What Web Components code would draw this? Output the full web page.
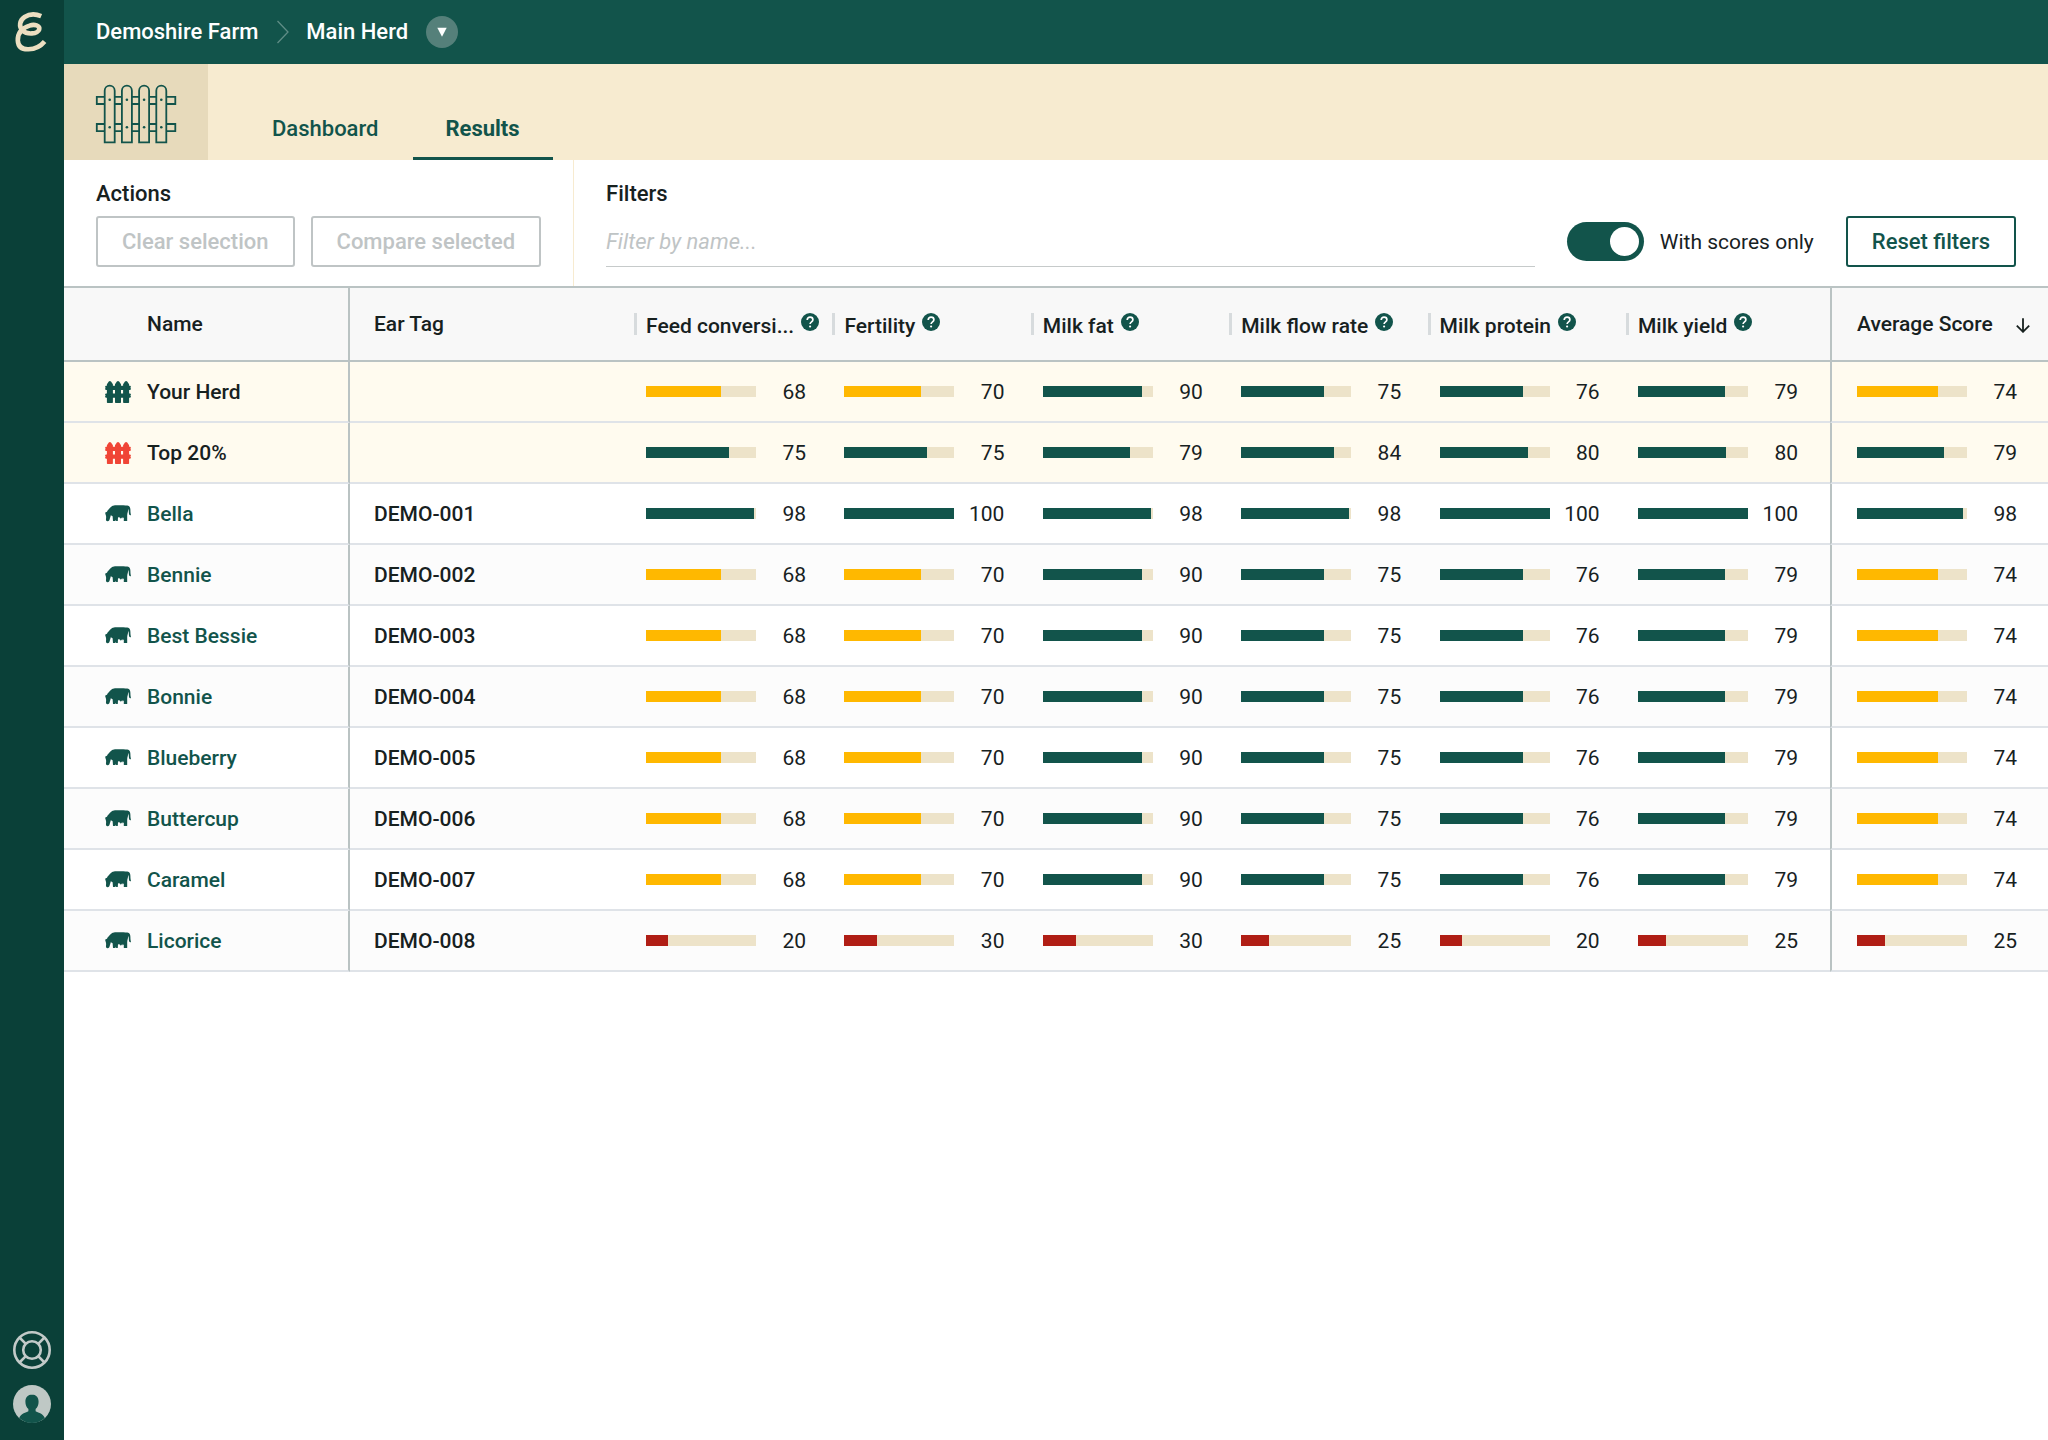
<!DOCTYPE html>
<html lang="en">
<head>
<meta charset="utf-8">
<title>Main Herd – Results</title>
<style>
  :root {
    --green: #12544b;
    --green-dark: #0a4038;
    --cream: #f7ebd0;
    --sand: #e7dabb;
    --ink: #17211f;
    --line: #bac3c3;
    --line-soft: #dfe3e8;
    --muted: #bfc4c5;
    --amber: #ffb800;
    --red: #b01e15;
    --track: #ede3c9;
  }
  body {
    margin: 0;
    background: #fff;
    color: var(--ink);
    font: 400 21px/28px Roboto, "Liberation Sans", sans-serif;
  }
</style>
</head>
<body>
<farm-app></farm-app>

<script>
const base = `
  *, *::before, *::after { box-sizing: border-box; }
  a { color: inherit; text-decoration: none; }
  svg { display: block; }
  button, input { font: inherit; color: inherit; margin: 0; }
`;

function define(name, html, setup) {
  const template = document.createElement('template');
  template.innerHTML = html;
  customElements.define(name, class extends HTMLElement {
    constructor() {
      super();
      this.attachShadow({ mode: 'open' }).append(template.content.cloneNode(true));
    }
    connectedCallback() { if (setup) setup(this, this.shadowRoot); }
  });
}

/* Action button: outlined, green or disabled grey */
define('action-button', `
  <style>${base}
    :host { display: block; }
    button {
      display: block; height: 51px; padding: 0 24px; white-space: nowrap;
      background: #fff; border: 2px solid var(--green); border-radius: 3px;
      color: var(--green); font-weight: 500; font-size: 22px; line-height: 28px;
    }
    button:disabled { border-color: var(--muted); color: var(--muted); }
  </style>
  <button type="button"><slot></slot></button>
`, (host, root) => {
  root.querySelector('button').disabled = host.hasAttribute('disabled');
});

define('score-bar', `
  <style>${base}
    :host { display: flex; align-items: center; justify-content: space-between; }
    .track { width: 110px; height: 11px; background: var(--track); }
    .fill { height: 100%; background: var(--green); }
    .mid { background: var(--amber); }
    .low { background: var(--red); }
    span { font-weight: 400; }
  </style>
  <div class="track"><div class="fill"></div></div><span></span>
`, (host, root) => {
  const v = Number(host.getAttribute('value'));
  const fill = root.querySelector('.fill');
  fill.style.width = (host.getAttribute('fill') || v) + '%';
  if (v < 50) fill.classList.add('low');
  else if (v < 75) fill.classList.add('mid');
  root.querySelector('span').textContent = v;
});

define('app-sidebar', `
  <style>${base}
    :host {
      display: flex; flex-direction: column; align-items: center;
      width: 64px; flex: none; padding: 6px 0 17px; background: var(--green-dark);
    }
    nav { margin-top: auto; display: grid; gap: 16px; }
    a { display: block; }
  </style>
  <a href="#home" aria-label="Home">
    <svg width="48" height="52" viewBox="8 6 48 52" fill="none" stroke="#ecdfc1" stroke-width="4.600">
      <path d="M41.200 16.200C36 14 29.500 13.900 24.600 17C19.500 20.500 18.600 26.500 22.500 30.500C27 34.800 37.500 34.300 39.200 29.500C40.200 25.500 34.500 23.900 29.500 25.600C21 28.200 17.600 34 17.800 40.500C18.200 47.500 23 49.500 28.500 49.300C36 49 40.500 46.500 44.600 41.500"/>
    </svg>
  </a>
  <nav>
    <a href="#help" aria-label="Help">
      <svg width="38" height="38" viewBox="0 0 38 38" fill="none" stroke="#c2cac8" stroke-width="2.600">
        <circle cx="19" cy="19" r="17.700"/><circle cx="19" cy="19" r="8.800"/>
        <path d="M6.500 6.500l6.300 6.300M31.500 6.500l-6.300 6.300M6.500 31.500l6.300-6.300M31.500 31.500l-6.300-6.300"/>
      </svg>
    </a>
    <a href="#account" aria-label="Account">
      <svg width="38" height="38" viewBox="0 0 38 38">
        <circle cx="19" cy="19" r="19" fill="#bfc8c5"/>
        <path fill="#12544b" d="M19 9.500c-4 0-6.600 3-6.600 7.200 0 3.200 1.200 5.800 3 7.300v2.300c-2.400 1.600-7 1.600-9.200 6.700A19 19 0 0 0 31.800 33c-2.200-5.100-6.800-5.100-9.200-6.700V24c1.800-1.500 3-4.100 3-7.300 0-4.200-2.600-7.200-6.600-7.200z"/>
      </svg>
    </a>
  </nav>
`);

define('app-header', `
  <style>${base}
    :host {
      display: flex; align-items: center; height: 64px; padding: 0 32px;
      background: var(--green); color: #fff; font-weight: 500; font-size: 22px;
    }
    .sep { margin: 0 16px 0 18px; }
    button {
      display: grid; place-items: center; width: 32px; height: 32px; margin-left: 18px;
      padding: 0; border: 0; border-radius: 50%; background: #55807a;
    }
  </style>
  <a href="#farm">Demoshire Farm</a>
  <svg class="sep" width="14" height="24" viewBox="0 0 14 24" fill="none" stroke="#5f8d86" stroke-width="1.300"><path d="M1.500 1l10.500 11L1.500 23"/></svg>
  <a href="#herd">Main Herd</a>
  <button type="button" aria-label="Choose herd">
    <svg width="10" height="10" viewBox="0 0 10 10"><path fill="#fff" d="M.3.800h9.400L5 9.800z"/></svg>
  </button>
`);

define('herd-tabs', `
  <style>${base}
    :host { display: flex; height: 96px; background: var(--cream); color: var(--green); font-weight: 500; font-size: 22px; }
    .tile { display: grid; place-items: center; width: 144px; padding-top: 4px; background: var(--sand); }
    nav { display: flex; gap: 2px; margin-left: 32px; }
    nav a { display: flex; align-items: flex-end; padding: 0 33px 14px 32px; border-bottom: 3px solid transparent; }
    nav a[aria-current] { border-color: var(--green); font-weight: 700; }
  </style>
  <div class="tile">
    <svg width="82" height="60" viewBox="95.500 84 82 60" fill="none" stroke="#12544b" stroke-width="1.800">
      <g fill="#e7dabb">
        <path d="M97.300 96.800h78.500v7.200h-78.500zM97.300 124h78.500v7.200h-78.500z"/>
        <path d="M105.200 142.300V90.700a5 5 0 0 1 10 0v51.600zM122.400 142.300V90.700a5 5 0 0 1 10 0v51.600zM139.600 142.300V90.700a5 5 0 0 1 10 0v51.600zM156.800 142.300V90.700a5 5 0 0 1 10 0v51.600z"/>
      </g>
      <g fill="#12544b" stroke="none">
        <circle cx="110.200" cy="99.700" r="1.300"/><circle cx="127.400" cy="99.700" r="1.300"/><circle cx="144.600" cy="99.700" r="1.300"/><circle cx="161.800" cy="99.700" r="1.300"/>
        <circle cx="110.200" cy="127.300" r="1.300"/><circle cx="127.400" cy="127.300" r="1.300"/><circle cx="144.600" cy="127.300" r="1.300"/><circle cx="161.800" cy="127.300" r="1.300"/>
      </g>
    </svg>
  </div>
  <nav>
    <a href="#dashboard">Dashboard</a>
    <a href="#results" aria-current="page">Results</a>
  </nav>
`);

define('herd-toolbar', `
  <style>${base}
    :host { display: flex; }
    section { padding: 20px 32px 19px; }
    h2 { margin: 0 0 8px; font-weight: 500; font-size: 22px; line-height: 28px; }
    .row { display: flex; align-items: center; gap: 16px; }
    .actions { border-right: 1px solid var(--cream); }
    .filters { flex: 1; }
    .filters .row { gap: 32px; }
    input[type=text] {
      flex: 1; min-width: 0; height: 51px; padding: 0; border: 0; border-bottom: 1px solid #c6caca;
      background: none; outline: 0; font-size: 22px;
    }
    input::placeholder { color: var(--muted); font-style: italic; opacity: 1; }
    label { display: flex; align-items: center; gap: 16px; font-size: 21px; white-space: nowrap; }
    input[type=checkbox] {
      appearance: none; width: 77px; height: 39px; padding: 5px; border-radius: 20px;
      background: var(--green); display: flex; justify-content: flex-end;
    }
    input[type=checkbox]::before { content: ""; width: 29px; height: 29px; border-radius: 50%; background: #fff; }
  </style>
  <section class="actions">
    <h2>Actions</h2>
    <div class="row">
      <action-button disabled>Clear selection</action-button>
      <action-button disabled>Compare selected</action-button>
    </div>
  </section>
  <section class="filters">
    <h2>Filters</h2>
    <div class="row">
      <input type="text" placeholder="Filter by name..." aria-label="Filter by name">
      <label><input type="checkbox" role="switch" checked>With scores only</label>
      <action-button>Reset filters</action-button>
    </div>
  </section>
`);

const fenceIcon = color => `<svg width="26" height="22" viewBox="0 0 26 22" fill="${color}">
  <path d="M.8 4.800h24.400l.8 1-.6 1 .6 1.200-.8 1H.8L0 8l.6-1.200L0 5.800zM.8 12.600h24.400l.8 1-.6 1 .6 1.200-.8 1H.8l-.8-1 .6-1.200-.6-1z"/>
  <path d="M1.900 21.500V3.200L3.800.5 4.900 0 6 .5l1.900 2.700v18.300l-.6.5H2.500zM10 21.500V3.200L11.900.5 13 0l1.100.5L16 3.200v18.300l-.6.5h-4.800zM18.100 21.500V3.200L20 .5l1.100-.5 1.100.5 1.900 2.700v18.300l-.6.5h-4.800z"/></svg>`;
const cowIcon = `<svg width="26" height="17" viewBox="0 0 26 17" fill="#12544b">
  <path d="M9 .4C12 0 19 .3 22.400.4C24.700.8 25.400 2.600 25.400 5C25.400 7.200 25.600 8.500 26 10C25 10.500 24.200 10 24 9C23.700 7 24 5.400 23.300 4C23 7 22.200 8 22.200 10.500V16H18.800V13L17.700 12.300L17 13.800L16.400 12.600L15.600 13.800L14.900 12.500L13 12.200L12.800 16H11.200L10.800 14.800L10.400 16H8L7.600 11.200L5.800 10.300C5.400 12 5 13 4.600 14.500C4.200 15.800 3.600 16.300 2.600 16.200C1.200 16.200.8 15.200 1 14C1.200 12.600 1.200 11.600.9 10.600C.7 9.500 0 8.600.3 7.600L2 6.800C2.500 5.200 4.500 3.600 5.600 2.300C6.500 1.200 7.500.6 9 .4Z"/></svg>`;
const helpIcon = `<svg width="18" height="18" viewBox="0 0 18 18" fill="none">
  <circle cx="9" cy="9" r="9" fill="#12544b"/>
  <path d="M6.200 7c0-1.700 1.200-2.800 2.900-2.800s2.800 1.100 2.800 2.600c0 2-2.800 2.100-2.800 4.200" stroke="#fff" stroke-width="1.700"/>
  <circle cx="9.100" cy="13.500" r="1.100" fill="#fff"/></svg>`;

define('herd-table', `
  <style>${base}
    :host { display: block; }
    table { width: 100%; table-layout: fixed; border-collapse: separate; border-spacing: 0; }
    .c-name { width: 286px; }
    .c-score { width: 10%; }
    .c-last { width: 204px; }
    .c-avg { width: 218px; }
    th, td { padding: 0; text-align: left; font-weight: 500; white-space: nowrap; vertical-align: middle; }
    thead th { height: 76px; background: #f8f8f8; border-top: 2px solid var(--line); border-bottom: 2px solid var(--line); }
    tbody th, tbody td { height: 61px; border-bottom: 2px solid var(--line-soft); }
    tbody tr:nth-child(even) > * { background: #fcfcfc; }
    tbody tr.summary > * { background: #fffbef; }
    tr > :nth-child(1) { border-right: 2px solid var(--line); }
    tr > :last-child { border-left: 2px solid var(--line); padding: 0 31px 0 25px; }
    thead tr > :last-child { padding-right: 18px; }
    tr > :nth-child(2) { padding-left: 24px; }
    .name { display: flex; align-items: center; gap: 16px; padding-left: 41px; }
    thead .name { padding-left: 83px; }
    .summary .name { color: var(--ink); }
    .name a { color: var(--green); }
    tbody td score-bar { padding-left: 12px; width: 172px; }
    tbody tr > :last-child score-bar { padding: 0; width: auto; }
    .metric { display: flex; align-items: center; gap: 7px; height: 22px; padding-left: 9px; border-left: 3px solid #d7dbdd; }
    .metric span { margin-top: 4px; }
    .metric button, .sort { padding: 0; border: 0; background: none; }
    .metric button { margin-bottom: 5px; }
    .sort { display: flex; align-items: center; justify-content: space-between; width: 100%; font-weight: 500; }
    .sort svg { margin-top: 3px; }
  </style>
  <table>
    <colgroup>
      <col class="c-name"><col>
      <col class="c-score"><col class="c-score"><col class="c-score"><col class="c-score"><col class="c-score">
      <col class="c-last"><col class="c-avg">
    </colgroup>
    <thead></thead>
    <tbody></tbody>
  </table>
`, (host, root) => {
  const metrics = ['Feed conversi...', 'Fertility', 'Milk fat', 'Milk flow rate', 'Milk protein', 'Milk yield'];
  const usual = [68, 70, 90, 75, 76, 79, 74];
  const rows = [
    ['Your Herd', '', usual],
    ['Top 20%', '', [75, 75, 79, 84, 80, 80, 79]],
    ['Bella', 'DEMO-001', [98, 100, 98, 98, 100, 100, 98], 96],
    ['Bennie', 'DEMO-002', usual],
    ['Best Bessie', 'DEMO-003', usual],
    ['Bonnie', 'DEMO-004', usual],
    ['Blueberry', 'DEMO-005', usual],
    ['Buttercup', 'DEMO-006', usual],
    ['Caramel', 'DEMO-007', usual],
    ['Licorice', 'DEMO-008', [20, 30, 30, 25, 20, 25, 25]]
  ];
  root.querySelector('thead').innerHTML = `<tr>
    <th scope="col"><div class="name">Name</div></th><th scope="col">Ear Tag</th>
    ${metrics.map(m => `<th scope="col"><div class="metric"><span>${m}</span><button type="button" aria-label="About this score">${helpIcon}</button></div></th>`).join('')}
    <th scope="col" aria-sort="descending"><button class="sort" type="button">Average Score
      <svg width="14" height="15" viewBox="0 0 14 15" fill="none" stroke="#17211f" stroke-width="1.800"><path d="M7 .3v13.300M.8 7.600L7 13.800l6.200-6.200"/></svg></button></th>
  </tr>`;
  root.querySelector('tbody').innerHTML = rows.map(([name, tag, scores, averageFill], i) => {
    const icon = i === 0 ? fenceIcon('#12544b') : i === 1 ? fenceIcon('#f04536') : cowIcon;
    const label = tag ? `<a href="#${tag}">${name}</a>` : `<span>${name}</span>`;
    return `<tr${tag ? '' : ' class="summary"'}><th scope="row"><div class="name">${icon}${label}</div></th><td>${tag}</td>
      ${scores.map((s, n) => `<td><score-bar value="${s}"${n === 6 && averageFill ? ` fill="${averageFill}"` : ''}></score-bar></td>`).join('')}</tr>`;
  }).join('');
});

define('farm-app', `
  <style>${base}
    :host { display: flex; min-height: 100vh; }
    main { flex: 1; min-width: 0; }
  </style>
  <app-sidebar></app-sidebar>
  <main>
    <app-header></app-header>
    <herd-tabs></herd-tabs>
    <herd-toolbar></herd-toolbar>
    <herd-table></herd-table>
  </main>
`);
</script>
</body>
</html>
